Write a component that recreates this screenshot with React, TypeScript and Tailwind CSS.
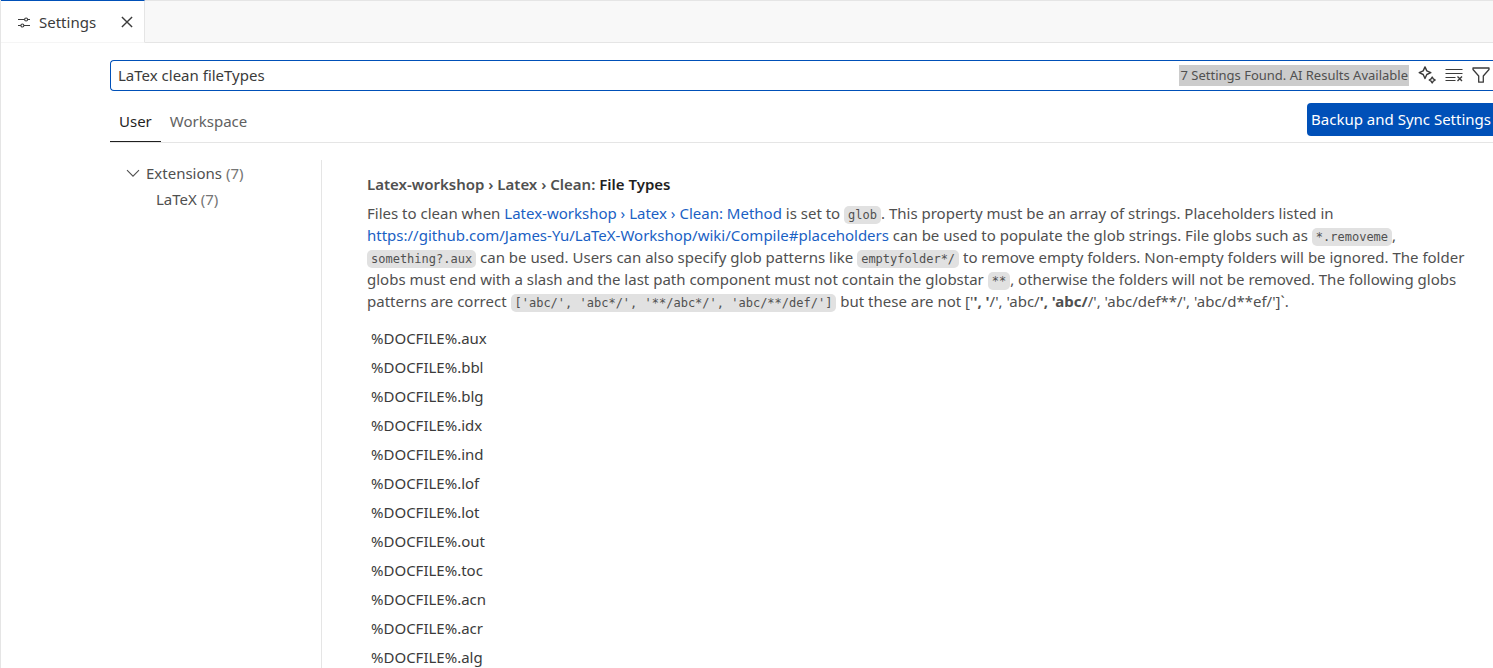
import { useState, type ReactNode } from "react";

const fileTypes = ["aux", "bbl", "blg", "idx", "ind", "lof", "lot", "out", "toc", "acn", "acr", "alg"];

function Code({ children }: { children: ReactNode }) {
  return (
    <code className="whitespace-nowrap rounded-[5px] bg-[#e1e1e1] px-1 py-0.5 font-['DejaVu_Sans_Mono',monospace] text-[12px] leading-none text-[#505050]">
      {children}
    </code>
  );
}

function SettingsIcon() {
  return (
    <svg viewBox="0 0 16 16" className="size-4" fill="none" stroke="currentColor" strokeWidth="1.1" aria-hidden="true">
      <path d="M2 5.5h6.6M11.6 5.5H14M2 11.5h2.9M7.9 11.5H14" />
      <circle cx="10.1" cy="5.5" r="1.5" />
      <circle cx="6.4" cy="11.5" r="1.5" />
    </svg>
  );
}

function CloseIcon() {
  return (
    <svg viewBox="0 0 16 16" className="size-4" fill="none" stroke="currentColor" strokeWidth="1.4" aria-hidden="true">
      <path d="M2.9 2.9l10.2 10.2M13.1 2.9L2.9 13.1" />
    </svg>
  );
}

function SparkleIcon() {
  return (
    <svg viewBox="0 0 18 18" className="size-[18px]" fill="none" stroke="currentColor" strokeWidth="1.4" strokeLinejoin="round" aria-hidden="true">
      <path d="M7 .9L8.8 4.9 12.8 6.7 8.8 8.5 7 12.5 5.2 8.5 1.2 6.7 5.2 4.9z" />
      <path d="M14.2 11L15.3 12.9 17.2 14 15.3 15.1 14.2 17 13.1 15.1 11.2 14 13.1 12.9z" />
    </svg>
  );
}

function ClearIcon() {
  return (
    <svg viewBox="0 0 18 18" className="size-[18px]" fill="none" stroke="currentColor" strokeWidth="1.2" aria-hidden="true">
      <path d="M.5 3.5h17M.5 7.5h17M.5 11.5h10M.5 14.5h10" />
      <path d="M12.5 10.5l4.5 4.5M17 10.5l-4.5 4.5" strokeWidth="1.4" />
    </svg>
  );
}

function FilterIcon() {
  return (
    <svg viewBox="0 0 18 18" className="size-[18px]" fill="none" stroke="currentColor" strokeWidth="1.3" strokeLinejoin="round" aria-hidden="true">
      <path d="M1 2h16v1.5L11.3 10v6.2H6.7V10L1 3.5z" />
    </svg>
  );
}

export default function App() {
  const [query, setQuery] = useState("LaTex clean fileTypes");
  return (
    <div className="flex h-screen flex-col overflow-hidden border-l border-[#e5e5e5] bg-white font-['Noto_Sans',sans-serif] text-[15px] leading-[22px] text-[#3b3b3b]">
      <header className="flex h-[43px] shrink-0 bg-[#f8f8f8]">
        <div className="flex items-center border-t border-r border-b border-t-[#0050b8] border-r-[#e5e5e5] border-b-[#f5f5f5] bg-white pr-[9px] pl-[15px]">
          <SettingsIcon />
          <span className="ml-[7px] w-[80px]">Settings</span>
          <button type="button" aria-label="Close" className="flex size-4 items-center justify-center">
            <CloseIcon />
          </button>
        </div>
        <div className="flex-1 border-t border-b border-[#e5e5e5]" />
      </header>

      <main className="flex min-h-0 flex-1 flex-col pt-[17px] pl-[109px]">
        <div className="flex h-[31px] shrink-0 items-center rounded-l-sm border border-r-0 border-[#0050b8] pr-[3px] pb-px pl-[7px]">
          <input
            aria-label="Search settings"
            value={query}
            onChange={(e) => setQuery(e.target.value)}
            className="min-w-0 flex-1 bg-transparent outline-none"
          />
          <span className="bg-[#cccccc] px-px text-[13px] leading-[21px] whitespace-nowrap text-[#505050]">7 Settings Found. AI Results Available</span>
          <div className="ml-[9px] flex gap-[9px]">
            <button type="button" aria-label="Show AI results"><SparkleIcon /></button>
            <button type="button" aria-label="Clear search"><ClearIcon /></button>
            <button type="button" aria-label="Filter settings"><FilterIcon /></button>
          </div>
        </div>

        <div className="flex h-[52px] shrink-0 items-end border-b border-[#e5e5e5]">
          <button type="button" className="h-[41px] border-b border-[#1f1f1f] px-[9px] pb-px text-[#1f1f1f]">User</button>
          <button type="button" className="h-[41px] border-b border-transparent px-[9px] pb-px text-[#616161]">Workspace</button>
          <button type="button" className="mb-[6px] ml-auto h-[33px] rounded-l-sm bg-[#0050b8] pr-[2px] pb-px pl-1 whitespace-nowrap text-white">
            Backup and Sync Settings
          </button>
        </div>

        <div className="flex min-h-0 flex-1 pt-[17px]">
          <nav aria-label="Settings groups" className="w-[212px] shrink-0 border-r border-[#e5e5e5] text-[#505050]">
            <button type="button" className="flex h-[26px] items-center pl-[15px]">
              <svg viewBox="0 0 16 16" className="mr-[5px] size-4" fill="none" stroke="currentColor" strokeWidth="1.1" aria-hidden="true">
                <path d="M2 5.2l6 6 6-6" />
              </svg>
              Extensions&nbsp;<span className="text-[#757575]">(7)</span>
            </button>
            <button type="button" className="flex h-[26px] items-center pl-[46px]">
              LaTeX&nbsp;<span className="text-[#757575]">(7)</span>
            </button>
          </nav>

          <section className="min-w-0 flex-1 pt-[13px] pl-[45px] text-[#505050]">
            <h2 className="font-semibold">
              Latex-workshop › Latex › Clean: <span className="text-[#1f1f1f]">File Types</span>
            </h2>
            <p className="mt-[7px] whitespace-nowrap">
              Files to clean when <a href="#method" className="text-[#1a5fc4]">Latex-workshop › Latex › Clean: Method</a> is set to <Code>glob</Code>. This property must be an array of strings. Placeholders listed in<br />
              <a href="https://github.com/James-Yu/LaTeX-Workshop/wiki/Compile#placeholders" className="text-[#1a5fc4]">https://github.com/James-Yu/LaTeX-Workshop/wiki/Compile#placeholders</a> can be used to populate the glob strings. File globs such as <Code>*.removeme</Code>,<br />
              <Code>something?.aux</Code> can be used. Users can also specify glob patterns like <Code>emptyfolder*/</Code> to remove empty folders. Non-empty folders will be ignored. The folder<br />
              globs must end with a slash and the last path component must not contain the globstar <Code>**</Code>, otherwise the folders will not be removed. The following globs<br />
              patterns are correct <Code>{"['abc/', 'abc*/', '**/abc*/', 'abc/**/def/']"}</Code> but these are not ['<strong>', '</strong>/', 'abc/<strong>', 'abc/</strong>/', 'abc/def**/', 'abc/d**ef/']`.
            </p>
            <ul className="mt-[12px] pl-1 leading-[29px] text-[#3b3b3b]">
              {fileTypes.map((ext) => (
                <li key={ext}>%DOCFILE%.{ext}</li>
              ))}
            </ul>
          </section>
        </div>
      </main>
    </div>
  );
}
